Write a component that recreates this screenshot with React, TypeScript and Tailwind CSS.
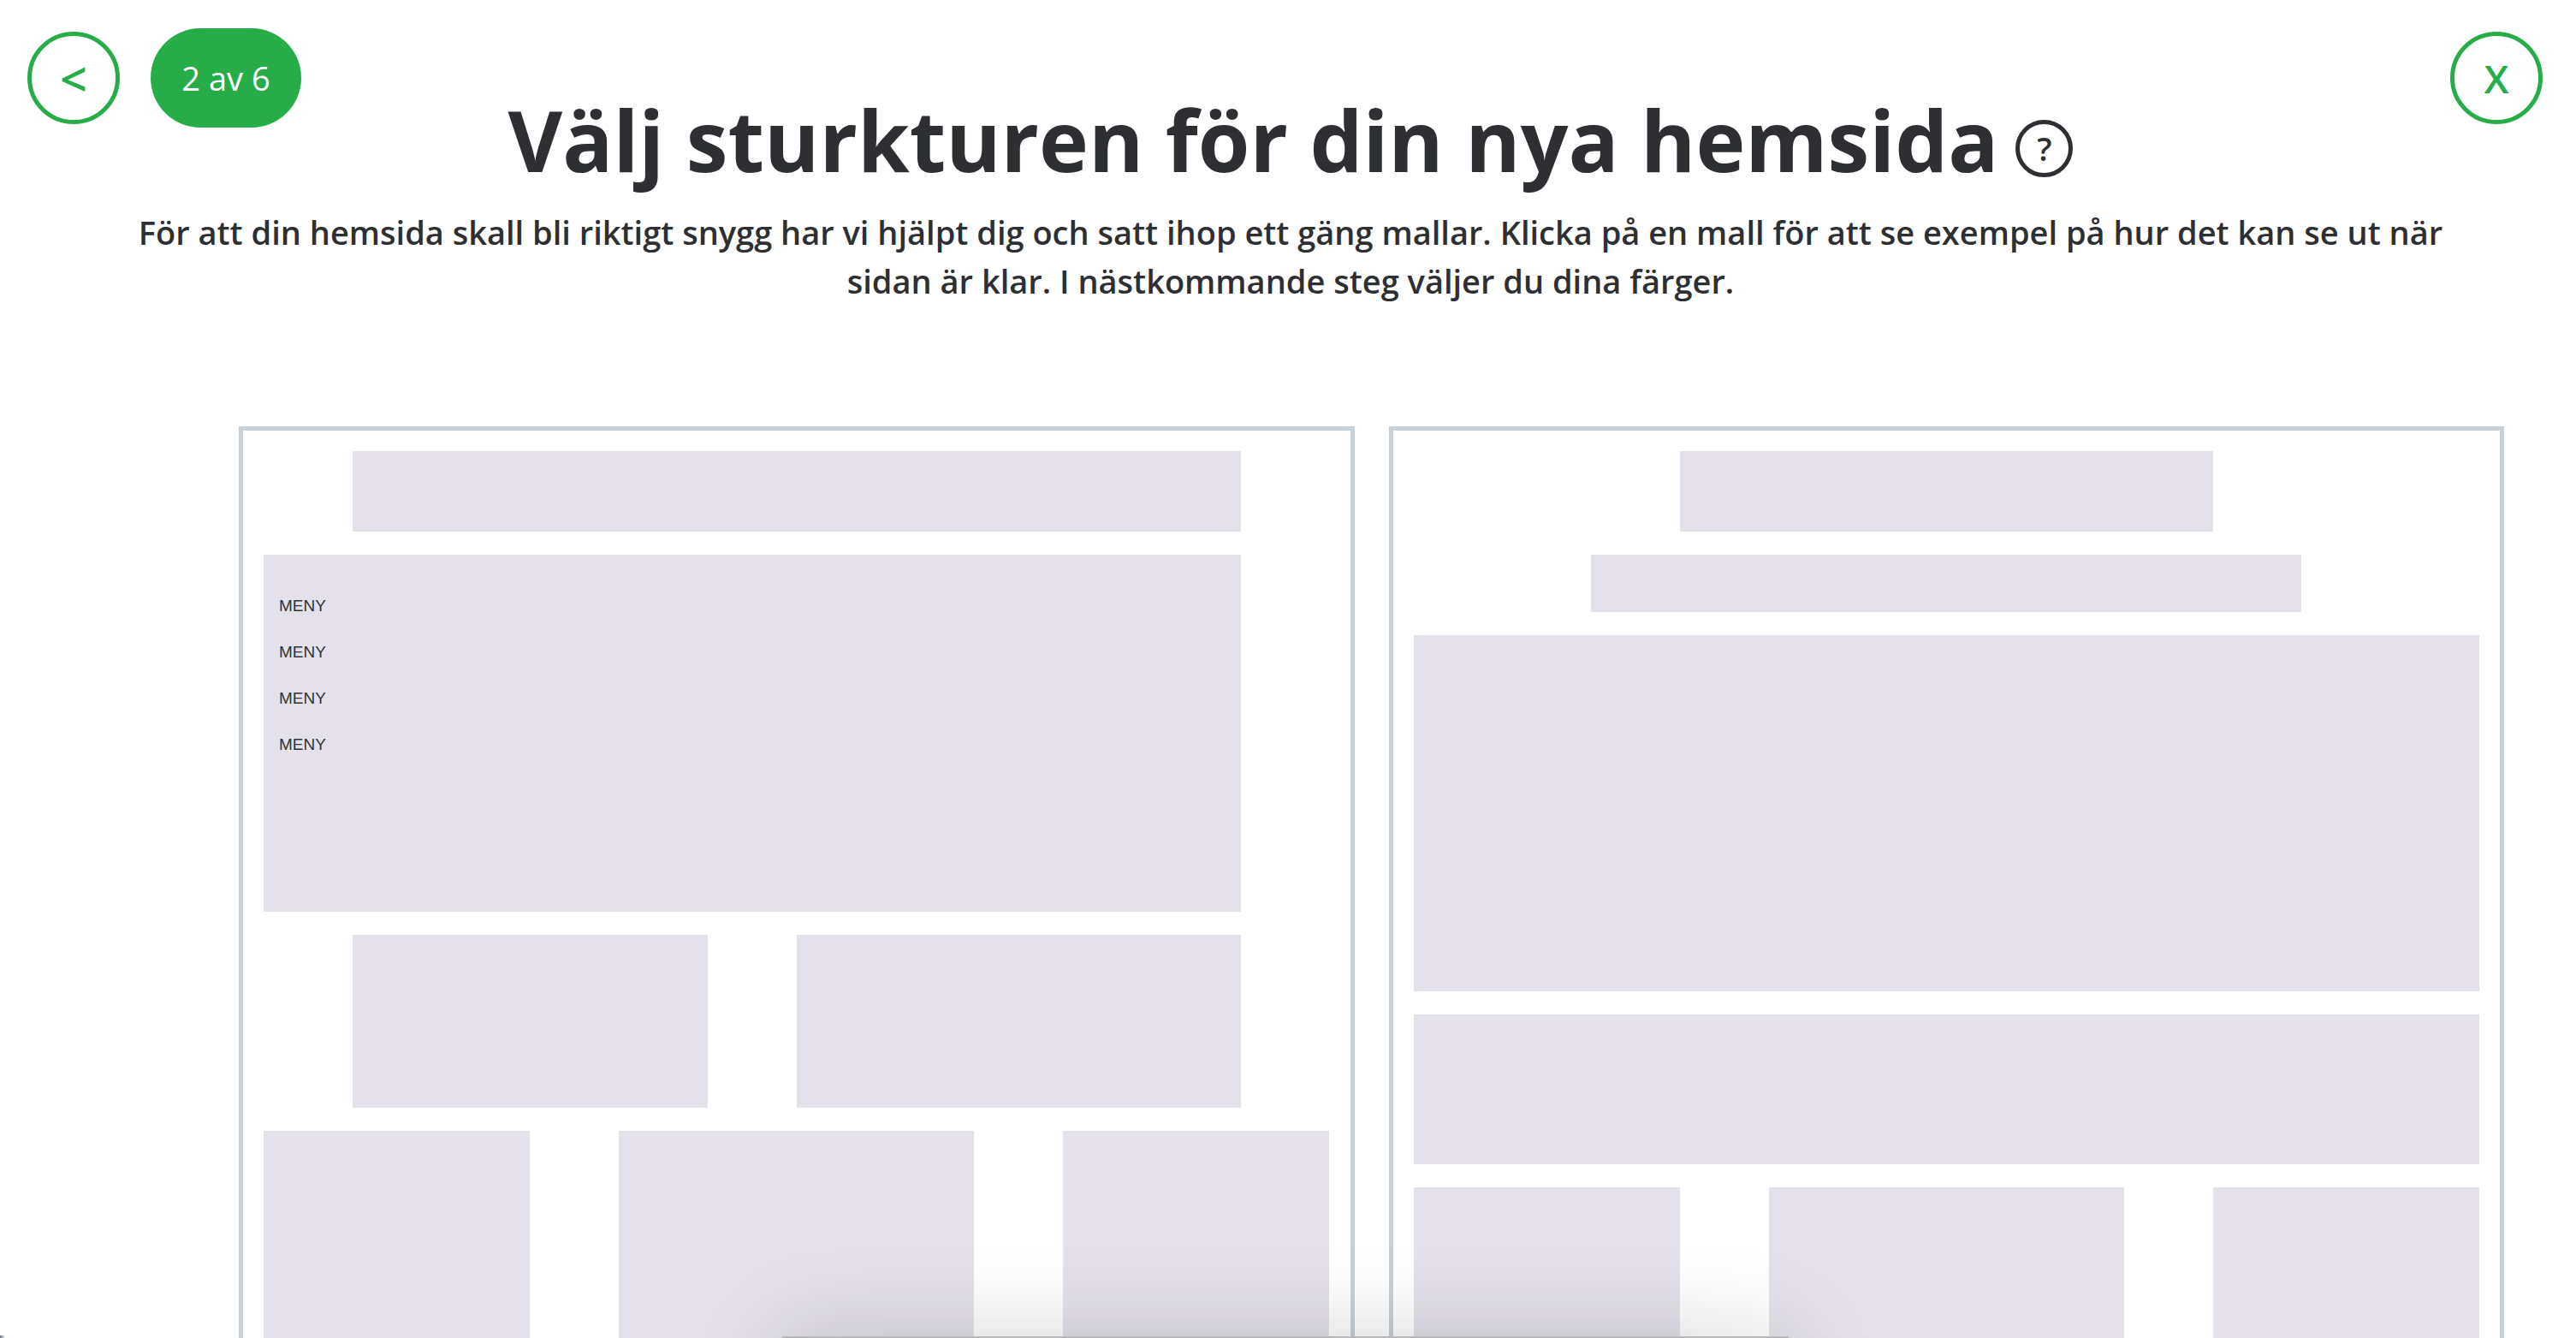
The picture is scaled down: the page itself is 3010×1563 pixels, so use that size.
import type { ReactNode } from "react";

const block = "bg-[#e4e1ea]";

function Row({ height, children }: { height: string; children: ReactNode }) {
  return <div className={`grid grid-cols-12 ${height}`}>{children}</div>;
}

function Board({ label, children }: { label: string; children: ReactNode }) {
  return (
    <button
      type="button"
      aria-label={label}
      className="flex flex-1 flex-col items-stretch justify-start gap-[27px] border-5 border-[#c7d1d9] bg-white p-6 text-left"
    >
      {children}
    </button>
  );
}

const menuItems = ["MENY", "MENY", "MENY", "MENY"];

export default function App() {
  return (
    <div className="relative h-screen overflow-hidden bg-white font-['Open_Sans',sans-serif] text-[#2e2f33]">
      <nav className="absolute inset-x-0 top-0 flex items-center justify-between pt-[33px] pr-[39px] pl-8">
        <div className="flex items-center gap-9">
          <button
            type="button"
            aria-label="Tillbaka"
            className="flex size-[108px] items-center justify-center rounded-full border-5 border-[#26ad48] text-[56px] font-semibold text-[#26ad48]"
          >
            &lt;
          </button>
          <span className="flex h-[116px] w-44 items-center justify-center rounded-full bg-[#26ad48] text-[38px] text-white">
            2 av 6
          </span>
        </div>
        <button
          type="button"
          aria-label="Stäng"
          className="flex size-[108px] items-center justify-center rounded-full border-5 border-[#26ad48] text-[46px] font-semibold text-[#26ad48]"
        >
          X
        </button>
      </nav>

      <header className="pt-[93px] pr-[144px] pl-[150px] text-center">
        <div className="flex items-center justify-center gap-5">
          <h1 className="text-[98px] leading-[140px] font-bold">
            Välj sturkturen för din nya hemsida
          </h1>
          <button
            type="button"
            aria-label="Hjälp"
            className="mt-5 flex size-[67px] items-center justify-center rounded-full border-5 border-[#2e2f33] text-[38px] font-semibold"
          >
            ?
          </button>
        </div>
        <p className="mt-[10px] text-[38px] leading-[57px] font-semibold">
          För att din hemsida skall bli riktigt snygg har vi hjälpt dig och satt ihop ett gäng mallar.
          Klicka på en mall för att se exempel på hur det kan se ut när sidan är klar. I nästkommande
          steg väljer du dina färger.
        </p>
      </header>

      <main className="mt-[141px] flex gap-10 pr-[84px] pl-[279px]">
        <Board label="Mall med sidomeny">
          <Row height="h-[94px]">
            <div className={`col-span-10 col-start-2 ${block}`} />
          </Row>
          <Row height="h-[417px]">
            <ul
              className={`col-span-11 pt-[33px] pl-[18px] font-['Liberation_Sans',sans-serif] text-[19px] leading-[54px] text-[#333333] ${block}`}
            >
              {menuItems.map((item, i) => (
                <li key={i}>{item}</li>
              ))}
            </ul>
          </Row>
          <Row height="h-[202px]">
            <div className={`col-span-4 col-start-2 ${block}`} />
            <div className={`col-span-5 col-start-7 ${block}`} />
          </Row>
          <Row height="h-[320px]">
            <div className={`col-span-3 ${block}`} />
            <div className={`col-span-4 col-start-5 ${block}`} />
            <div className={`col-span-3 col-start-10 ${block}`} />
          </Row>
        </Board>
        <Board label="Mall med toppmeny">
          <Row height="h-[94px]">
            <div className={`col-span-6 col-start-4 ${block}`} />
          </Row>
          <Row height="h-[67px]">
            <div className={`col-span-8 col-start-3 ${block}`} />
          </Row>
          <Row height="h-[416px]">
            <div className={`col-span-12 ${block}`} />
          </Row>
          <Row height="h-[175px]">
            <div className={`col-span-12 ${block}`} />
          </Row>
          <Row height="h-[254px]">
            <div className={`col-span-3 ${block}`} />
            <div className={`col-span-4 col-start-5 ${block}`} />
            <div className={`col-span-3 col-start-10 ${block}`} />
          </Row>
        </Board>
      </main>

      <div className="pointer-events-none absolute -bottom-[398px] left-[914px] h-[400px] w-[1176px] bg-[#b9b8bb] shadow-[0_0_100px_rgba(0,0,0,0.17)]" />
      <div className="pointer-events-none absolute bottom-0 left-0 h-[3px] w-[6px] bg-linear-to-r from-gray-500 to-white" />
    </div>
  );
}
